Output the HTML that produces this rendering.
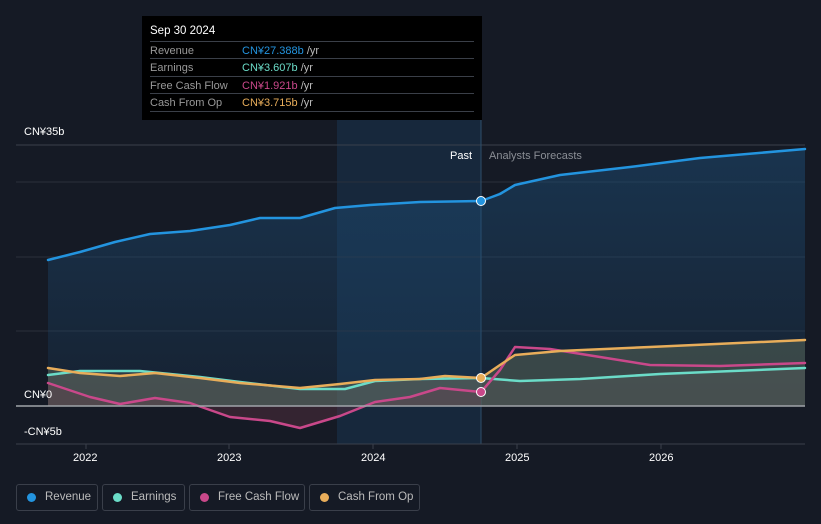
<!DOCTYPE html>
<html><head><style>
body{margin:0;width:821px;height:524px;background:#151a25;font-family:"Liberation Sans",sans-serif;overflow:hidden;position:relative}
.tt{position:absolute;left:142px;top:16px;width:340px;height:104px;background:#000;color:#fff;font-size:11px}
.tt .h{position:absolute;left:8px;top:9px;font-size:11.5px}
.tt .r{position:absolute;left:8px;width:324px;height:17px;border-top:1px solid #3a3f48;color:#999}
.tt .r span{position:absolute;left:92px;top:3px}
.tt .r b{font-weight:normal;position:absolute;top:3px;left:0}
.leg{position:absolute;top:484px;height:27px;border:1px solid #3a3f4a;border-radius:3px;color:#bbb;font-size:11.5px;line-height:25px;box-sizing:border-box;padding-left:27px;white-space:nowrap}
.leg i{position:absolute;left:10px;top:8px;width:9px;height:9px;border-radius:50%}
.lab{position:absolute;color:#fff;font-size:11px}
</style></head><body>
<svg width="821" height="524" style="position:absolute;left:0;top:0">
<defs>
<linearGradient id="rv" x1="0" y1="0" x2="0" y2="1"><stop offset="0" stop-color="#1d4e78" stop-opacity=".5"/><stop offset="1" stop-color="#1d4e78" stop-opacity=".15"/></linearGradient>
</defs>
<rect x="337" y="120" width="144" height="324" fill="#1a3a58" opacity=".45"/>
<line x1="16" y1="145" x2="805" y2="145" stroke="#3a404b"/>
<line x1="16" y1="182" x2="805" y2="182" stroke="#2a303b"/>
<line x1="16" y1="257" x2="805" y2="257" stroke="#2a303b"/>
<line x1="16" y1="331" x2="805" y2="331" stroke="#2a303b"/>
<line x1="481" y1="120" x2="481" y2="444" stroke="#2e4e6a"/>
<polygon fill="url(#rv)" points="48,260 80,252 115,242 150,234 190,231 230,225 260,218 300,218 335,208 370,205 420,202 481,201 515,185 560,175 630,167 700,158 805,149 805,406 48,406"/>
<polygon fill="#5c6a5a" opacity=".5" points="48,368 80,373 120,376 155,373 200,378 240,383 300,388 340,384 375,380 420,379 445,376 481,378 515,355 560,351 650,347 805,340 805,406 48,406"/>
<polygon fill="#5a3040" opacity=".45" points="48,383 90,397 120,404 155,398 190,403 230,417 270,421 300,428 340,416 375,402 410,397 440,388 481,392 481,406 48,406"/>
<polygon fill="#666" opacity=".3" points="48,375 80,371 140,371 200,377 240,382 300,389 345,389 375,381 420,379 481,378 520,381 580,379 660,374 805,368 805,406 48,406"/>
<g fill="none" stroke-width="2.5" stroke-linejoin="round" stroke-linecap="round">
<polyline stroke="#2394df" points="48,260 80,252 115,242 150,234 190,231 230,225 260,218 300,218 335,208 370,205 420,202 481,201 500,194 515,185 560,175 630,167 700,158 805,149"/>
<polyline stroke="#6bdcc8" points="48,375 80,371 140,371 200,377 240,382 300,389 345,389 375,381 420,379 481,378 520,381 580,379 660,374 805,368"/>
<polyline stroke="#c9488a" points="48,383 90,397 120,404 155,398 190,403 230,417 270,421 300,428 340,416 375,402 410,397 440,388 481,392 500,370 515,347 550,349 600,357 650,365 720,366 805,363"/>
<polyline stroke="#e8ad5a" points="48,368 80,373 120,376 155,373 200,378 240,383 300,388 340,384 375,380 420,379 445,376 481,378 500,365 515,355 560,351 650,347 805,340"/>
</g>
<line x1="16" y1="406" x2="805" y2="406" stroke="#a0a4aa" stroke-width="1.5"/>
<line x1="16" y1="444" x2="805" y2="444" stroke="#3a404b"/>
<g stroke="#3a404b"><line x1="86" y1="444" x2="86" y2="449"/><line x1="229" y1="444" x2="229" y2="449"/><line x1="373" y1="444" x2="373" y2="449"/><line x1="517" y1="444" x2="517" y2="449"/><line x1="661" y1="444" x2="661" y2="449"/></g>
<circle cx="481" cy="201" r="4.5" fill="#2394df" stroke="#fff" stroke-width="1"/>
<circle cx="481" cy="378" r="4.5" fill="#e8ad5a" stroke="#fff" stroke-width="1"/>
<circle cx="481" cy="392" r="4.5" fill="#c9488a" stroke="#fff" stroke-width="1"/>
</svg>
<div class="lab" style="left:24px;top:126px">CN¥35b</div>
<div class="lab" style="left:24px;top:389px">CN¥0</div>
<div class="lab" style="left:24px;top:426px">-CN¥5b</div>
<div class="lab" style="left:450px;top:150px">Past</div>
<div class="lab" style="left:489px;top:150px;color:#8a8e95">Analysts Forecasts</div>
<div class="lab" style="left:73px;top:452px">2022</div>
<div class="lab" style="left:217px;top:452px">2023</div>
<div class="lab" style="left:361px;top:452px">2024</div>
<div class="lab" style="left:505px;top:452px">2025</div>
<div class="lab" style="left:649px;top:452px">2026</div>
<div class="tt">
<div class="h">Sep 30 2024</div>
<div class="r" style="top:25px"><b>Revenue</b><span style="color:#2394df">CN¥27.388b <i style="font-style:normal;color:#bbb">/yr</i></span></div>
<div class="r" style="top:42px"><b>Earnings</b><span style="color:#6bdcc8">CN¥3.607b <i style="font-style:normal;color:#bbb">/yr</i></span></div>
<div class="r" style="top:60px"><b>Free Cash Flow</b><span style="color:#c9488a">CN¥1.921b <i style="font-style:normal;color:#bbb">/yr</i></span></div>
<div class="r" style="top:77px;border-bottom:1px solid #3a3f48"><b>Cash From Op</b><span style="color:#e8ad5a">CN¥3.715b <i style="font-style:normal;color:#bbb">/yr</i></span></div>
</div>
<div class="leg" style="left:16px;width:82px;padding-left:28px"><i style="background:#2394df"></i>Revenue</div>
<div class="leg" style="left:102px;width:83px;padding-left:28px"><i style="background:#6bdcc8"></i>Earnings</div>
<div class="leg" style="left:189px;width:116px;padding-left:28px"><i style="background:#c9488a"></i>Free Cash Flow</div>
<div class="leg" style="left:309px;width:111px;padding-left:28px"><i style="background:#e8ad5a"></i>Cash From Op</div>
</body></html>
